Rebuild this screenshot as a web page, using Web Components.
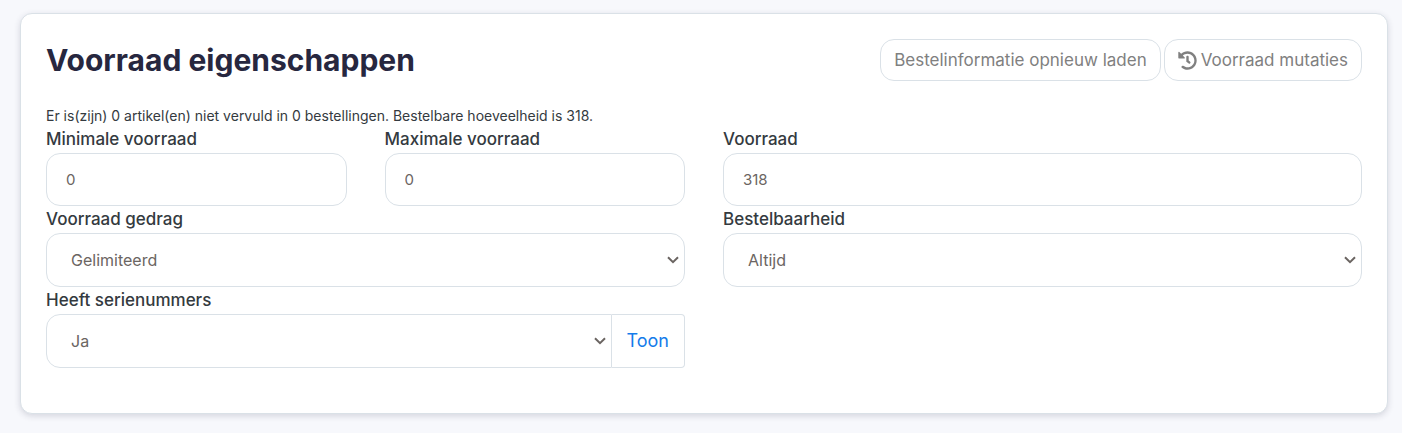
<!DOCTYPE html>
<html lang="nl">
<head>
<meta charset="utf-8">
<meta name="viewport" content="width=device-width, initial-scale=1">
<title>Voorraad eigenschappen</title>
<style>
  body {
    margin: 0;
    padding: 13px 14px 19px 20px;
    background: #f7f8fc;
    color: #343a40;
    font-family: Inter, "Liberation Sans", sans-serif;
    --line: #dae1e7;
    --field: #6b6562;
    --radius: 14px;
  }
</style>
</head>
<body>
<stock-card>
  <span slot="title">Voorraad eigenschappen</span>
  <action-button slot="actions">Bestelinformatie opnieuw laden</action-button>
  <action-button slot="actions" icon="history">Voorraad mutaties</action-button>
  <span slot="info">Er is(zijn) 0 artikel(en) niet vervuld in 0 bestellingen. Bestelbare hoeveelheid is 318.</span>
  <text-field label="Minimale voorraad" value="0"></text-field>
  <text-field label="Maximale voorraad" value="0"></text-field>
  <text-field class="wide" label="Voorraad" value="318"></text-field>
  <select-field class="wide" label="Voorraad gedrag" options="Gelimiteerd,Ongelimiteerd"></select-field>
  <select-field class="wide" label="Bestelbaarheid" options="Altijd,Nooit"></select-field>
  <select-field class="wide" label="Heeft serienummers" options="Ja,Nee" action="Toon"></select-field>
</stock-card>

<script>
  class StockCard extends HTMLElement {
    constructor() {
      super();
      this.attachShadow({ mode: 'open' }).innerHTML = `
        <style>
          :host { display: block; }
          section {
            box-sizing: border-box;
            padding: 25px 25px 45px;
            background: #fff;
            border: 1px solid var(--line);
            border-radius: 12px;
            box-shadow: 0 2px 6px rgba(40, 40, 70, .16);
          }
          header { display: flex; justify-content: space-between; align-items: center; gap: 24px; flex-wrap: wrap; }
          h2 { margin: 0; font-size: 30px; line-height: 42px; font-weight: 700; color: #27273f; }
          .actions { display: flex; flex-wrap: wrap; gap: 3px; }
          p { margin: 25px 0 0; font-size: 14px; line-height: 20px; }
          form { display: grid; grid-template-columns: repeat(4, minmax(0, 1fr)); column-gap: 38px; }
          ::slotted(.wide) { grid-column: span 2; }
          @media (max-width: 700px) {
            form { grid-template-columns: repeat(2, minmax(0, 1fr)); }
          }
        </style>
        <section>
          <header>
            <h2><slot name="title"></slot></h2>
            <div class="actions"><slot name="actions"></slot></div>
          </header>
          <p><slot name="info"></slot></p>
          <form><slot></slot></form>
        </section>`;
    }
  }

  class ActionButton extends HTMLElement {
    connectedCallback() {
      const icon = this.getAttribute('icon') === 'history'
        ? `<svg viewBox="0 0 512 512" aria-hidden="true"><path d="M504 255.531c.253 136.64-111.18 248.372-247.82 248.468-59.015.042-113.223-20.53-155.822-54.911-11.077-8.94-11.905-25.541-1.839-35.607l11.267-11.267c8.609-8.609 22.353-9.551 31.891-1.984C173.062 425.135 212.781 440 256 440c101.705 0 184-82.311 184-184 0-101.705-82.311-184-184-184-48.814 0-93.149 18.969-126.068 49.932l50.754 50.754c10.08 10.08 2.941 27.314-11.313 27.314H24c-8.837 0-16-7.163-16-16V38.627c0-14.254 17.234-21.393 27.314-11.314l49.372 49.372C129.209 34.136 189.552 8 256 8c136.81 0 247.747 110.78 248 247.531zm-180.912 78.784l9.823-12.63c8.138-10.463 6.253-25.542-4.21-33.679L288 256.349V152c0-13.255-10.745-24-24-24h-16c-13.255 0-24 10.745-24 24v135.651l65.409 50.874c10.463 8.137 25.541 6.253 33.679-4.21z"/></svg>` : '';
      this.attachShadow({ mode: 'open' }).innerHTML = `
        <style>
          :host { display: block; }
          button {
            display: flex; align-items: center; gap: 4px;
            padding: 8px 13px;
            border: 1px solid var(--line);
            border-radius: var(--radius);
            background: #fff;
            color: #808080;
            font: 400 17px/24px Inter, "Liberation Sans", sans-serif;
            cursor: pointer;
          }
          svg { width: 19px; height: 19px; fill: currentColor; }
        </style>
        <button type="button">${icon}<slot></slot></button>`;
    }
  }

  const fieldStyles = `
    :host { display: block; min-width: 0; }
    label { display: block; font-size: 17px; line-height: 27px; font-weight: 500; }
    input, select {
      box-sizing: border-box; display: block; width: 100%; margin: 0;
      border: 1px solid var(--line); border-radius: var(--radius);
      background-color: #fff; color: var(--field);
      font-family: inherit; outline-offset: -1px;
    }`;

  class TextField extends HTMLElement {
    connectedCallback() {
      this.attachShadow({ mode: 'open' }).innerHTML = `
        <style>${fieldStyles}
          input { height: 53px; padding: 0 19px; font-size: 15px; }
        </style>
        <label for="control">${this.getAttribute('label')}</label>
        <input id="control" type="text" inputmode="numeric" value="${this.getAttribute('value')}">`;
    }
  }

  class SelectField extends HTMLElement {
    connectedCallback() {
      const options = this.getAttribute('options').split(',').map(o => `<option>${o}</option>`).join('');
      const action = this.getAttribute('action');
      this.attachShadow({ mode: 'open' }).innerHTML = `
        <style>${fieldStyles}
          .group { display: flex; }
          select {
            flex: 1; min-width: 0; height: 54px; padding: 0 24px; font-size: 16px;
            appearance: none;
            background-image: url("data:image/svg+xml,%3Csvg xmlns='http://www.w3.org/2000/svg' width='12' height='8' fill='none' stroke='%236b6562' stroke-width='2'%3E%3Cpath d='M1 1.2 6 6.2 11 1.2'/%3E%3C/svg%3E");
            background-repeat: no-repeat;
            background-position: right 5px center;
          }
          .joined select { border-radius: var(--radius) 0 0 var(--radius); }
          button {
            padding: 0 15px; border: 1px solid var(--line); border-left: 0;
            border-radius: 0 4px 4px 0; background: #fff; color: #147bea;
            font: 400 18px/24px Inter, "Liberation Sans", sans-serif; cursor: pointer;
          }
        </style>
        <label for="control">${this.getAttribute('label')}</label>
        <div class="group${action ? ' joined' : ''}">
          <select id="control">${options}</select>
          ${action ? `<button type="button">${action}</button>` : ''}
        </div>`;
    }
  }

  customElements.define('stock-card', StockCard);
  customElements.define('action-button', ActionButton);
  customElements.define('text-field', TextField);
  customElements.define('select-field', SelectField);
</script>
</body>
</html>
